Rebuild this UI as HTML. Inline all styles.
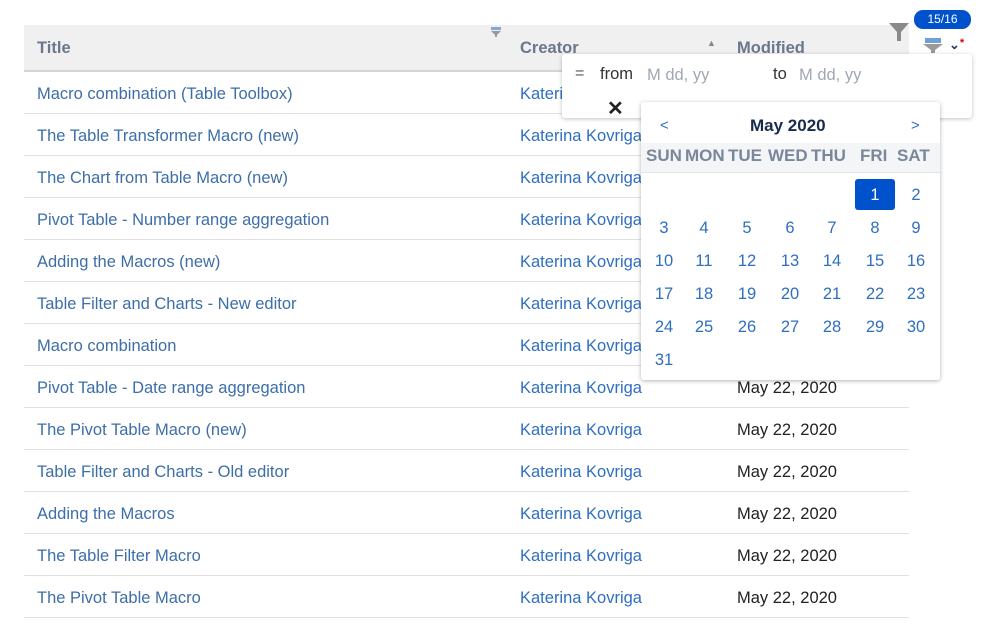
<!DOCTYPE html>
<html><head><style>
body{margin:0;width:999px;height:624px;background:#fff;font-family:"Liberation Sans",sans-serif;position:relative;overflow:hidden}
.a{position:absolute;white-space:nowrap}
.hdr{left:24px;top:25px;width:885px;height:45px;background:#f0f0f0;border-bottom:2px solid #d5d5d5}
.row{left:24px;width:885px;height:41px;border-bottom:1px solid #e1e1e1}
.t{font-size:16.5px;color:#3d6ea8}
.c{font-size:16.5px;color:#2f6fc0}
.m{font-size:16.5px;color:#222}
.d{position:absolute;width:40px;text-align:center;font-size:16.5px;color:#2f6fc0}
.w{position:absolute;top:146px;font-size:17px;font-weight:bold;color:#7a869a}
</style></head><body>
<div class="a hdr"></div>
<div class="a" style="left:37px;top:39px;font-size:16.5px;color:#6b778c;font-weight:bold">Title</div>
<div class="a" style="left:520px;top:39px;font-size:16.5px;color:#6b778c;font-weight:bold">Creator</div>
<div class="a" style="left:737px;top:39px;font-size:16.5px;color:#6b778c;font-weight:bold">Modified</div>
<div class="a" style="left:707px;top:38px;font-size:9px;color:#888">▲</div>
<svg class="a" style="left:490px;top:26px" width="12" height="12"><rect x="1" y="1" width="10" height="3" fill="#7fa9d8"/><path d="M1 5h10l-4 4v2h-2v-2z" fill="#999"/></svg>
<svg class="a" style="left:888px;top:22px" width="22" height="20"><path d="M1 1h20l-8 9v9h-4v-9z" fill="#8a8a8a"/></svg>
<div class="a" style="left:914px;top:10px;width:57px;height:19px;background:#0052cc;border-radius:9px;color:#fff;font-size:12px;text-align:center;line-height:19px">15/16</div>
<svg class="a" style="left:922px;top:37px" width="22" height="16"><rect x="3" y="1" width="16" height="5" fill="#6f9fd8"/><path d="M1 7h20l-8 6v3h-4v-3z" fill="#999"/></svg>
<div class="a" style="left:949px;top:37px;font-size:13px;color:#243a6b;font-weight:bold">⌄<span style="color:#d00;font-size:11px;vertical-align:top">*</span></div>
<script>
var rows=[["Macro combination (Table Toolbox)","Kateri"],["The Table Transformer Macro (new)","Katerina Kovriga"],["The Chart from Table Macro (new)","Katerina Kovriga"],["Pivot Table - Number range aggregation","Katerina Kovriga"],["Adding the Macros (new)","Katerina Kovriga"],["Table Filter and Charts - New editor","Katerina Kovriga"],["Macro combination","Katerina Kovriga"],["Pivot Table - Date range aggregation","Katerina Kovriga","May 22, 2020"],["The Pivot Table Macro (new)","Katerina Kovriga","May 22, 2020"],["Table Filter and Charts - Old editor","Katerina Kovriga","May 22, 2020"],["Adding the Macros","Katerina Kovriga","May 22, 2020"],["The Table Filter Macro","Katerina Kovriga","May 22, 2020"],["The Pivot Table Macro","Katerina Kovriga","May 22, 2020"]];
var h="";rows.forEach(function(r,i){var y=72+i*42;h+='<div class="a row" style="top:'+y+'px"></div><div class="a t" style="left:37px;top:'+(y+13)+'px">'+r[0]+'</div><div class="a c" style="left:520px;top:'+(y+13)+'px">'+r[1]+'</div>'+(r[2]?'<div class="a m" style="left:737px;top:'+(y+13)+'px">'+r[2]+'</div>':'');});
document.write(h);
</script>
<div class="a" style="left:562px;top:54px;width:410px;height:64px;background:#fff;border-radius:3px;box-shadow:0 1px 4px rgba(0,0,0,.25)"></div>
<div class="a" style="left:575px;top:65px;font-size:16px;color:#555">=</div>
<div class="a" style="left:600px;top:65px;font-size:16.5px;color:#333">from</div>
<div class="a" style="left:647px;top:66px;font-size:16.5px;color:#a0a8b4">M dd, yy</div>
<div class="a" style="left:773px;top:65px;font-size:16.5px;color:#333">to</div>
<div class="a" style="left:799px;top:66px;font-size:16.5px;color:#a0a8b4">M dd, yy</div>
<div class="a" style="left:607px;top:96px;font-size:20px;color:#222;font-weight:bold">✕</div>
<div class="a" style="left:641px;top:102px;width:299px;height:278px;background:#fff;border-radius:3px;box-shadow:0 1px 4px rgba(0,0,0,.3)"></div>
<div class="a" style="left:641px;top:143px;width:299px;height:29px;background:#f4f5f7;border-bottom:1px solid #e4e4e4"></div>
<div class="a" style="left:660px;top:117px;font-size:15px;color:#2f6fc0">&lt;</div>
<div class="a" style="left:911px;top:117px;font-size:15px;color:#2f6fc0">&gt;</div>
<div class="a" style="left:750px;top:116px;font-size:17px;font-weight:bold;color:#172b4d">May 2020</div>
<div class="w" style="left:646px">SUN</div>
<div class="w" style="left:685px">MON</div>
<div class="w" style="left:728px">TUE</div>
<div class="w" style="left:768px">WED</div>
<div class="w" style="left:811px">THU</div>
<div class="w" style="left:860px">FRI</div>
<div class="w" style="left:897px">SAT</div>
<div class="a" style="left:855px;top:179px;width:40px;height:31px;background:#0052cc;border-radius:3px"></div>
<script>
var xs=[664,704,747,790,832,875,916],h2="";
for(var d=1;d<=31;d++){var p=d+4,col=p%7,rw=Math.floor(p/7);h2+='<div class="d" style="left:'+(xs[col]-20)+'px;top:'+(186+rw*33)+'px;'+(d==1?'color:#fff':'')+'">'+d+'</div>';}
document.write(h2);
</script>
</body></html>
